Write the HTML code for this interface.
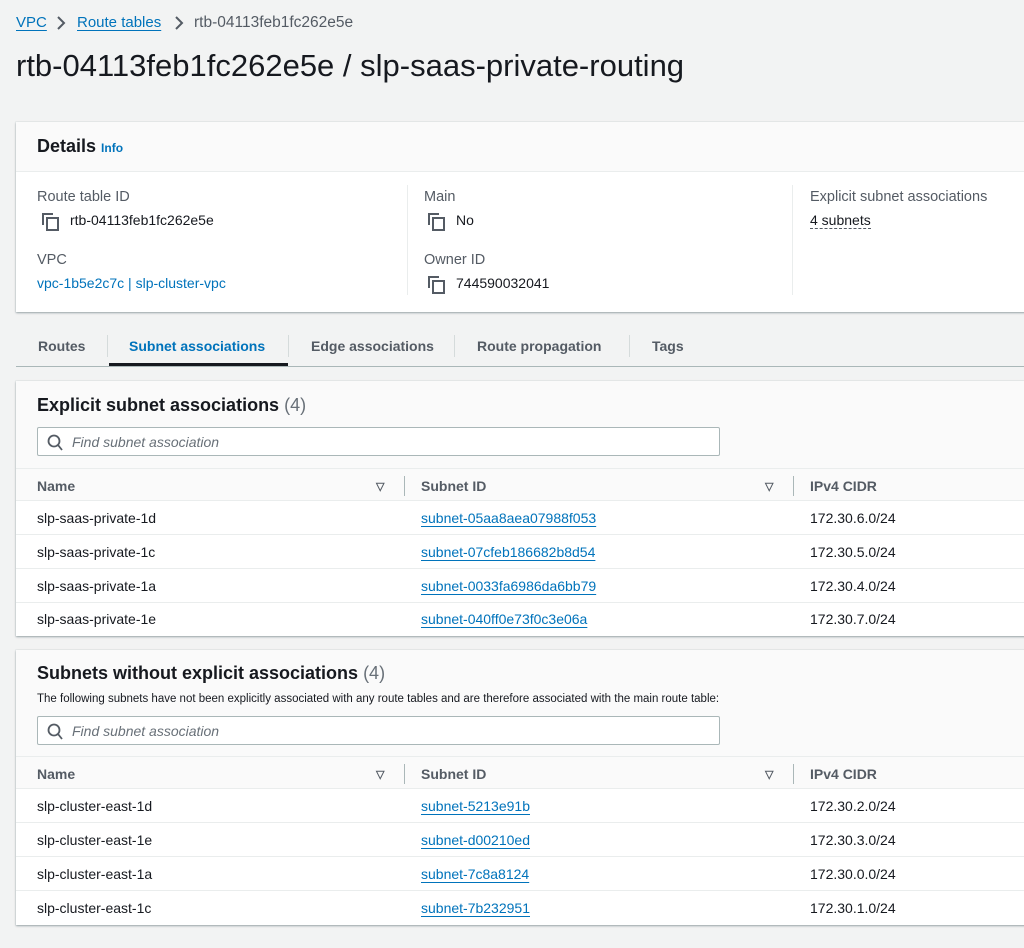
<!DOCTYPE html>
<html><head><meta charset="utf-8"><style>
*{box-sizing:border-box;margin:0;padding:0}
body{width:1024px;height:948px;background:#f2f3f3;font-family:"Liberation Sans",Arial,sans-serif;color:#16191f;position:relative;overflow:hidden;font-size:14px}
.a{position:absolute;white-space:nowrap}
.lk{color:#0073bb}
.ul{text-decoration:underline;text-underline-offset:3px}
.panel{position:absolute;left:16px;width:1020px;background:#fff;box-shadow:0 1px 2px rgba(0,28,36,.35),0 0 0 1px #eaeded}
.hd{background:#fafafa;position:absolute;left:0;right:0;top:0}
.lab{color:#545b64;font-size:14.5px}
.cp{display:inline-block;width:13px;height:14px;position:relative;vertical-align:-2px;margin-right:15px}
.cp:before{content:"";position:absolute;left:0;top:0;width:9px;height:10px;border-left:2px solid #545b64;border-top:2px solid #545b64}
.cp:after{content:"";position:absolute;left:4px;top:4px;width:9px;height:10px;border:2px solid #545b64}
.search{position:absolute;left:21px;width:683px;height:29px;border:1px solid #aab7b8;border-radius:2px;background:#fff}
.search span{position:absolute;left:34px;top:6px;font-style:italic;color:#687078;font-size:14px}
.th{position:absolute;left:0;right:0;height:33px;background:#fafafa;border-top:1px solid #eaeded;border-bottom:1px solid #eaeded;font-weight:bold;color:#545b64}
.row{position:absolute;left:0;right:0;height:34px;border-bottom:1px solid #eaeded}
.row span,.th span{position:absolute;top:9px}
.vd{position:absolute;top:7px;width:1px;height:20px;background:#aab7b8}
.th .tri{position:absolute;top:11px;font-size:11px;color:#545b64}
</style></head><body>
<div class="a lk ul" style="left:16px;top:14px;font-size:15px">VPC</div>
<svg class="a" style="left:56px;top:15px" width="10" height="16" viewBox="0 0 10 16"><path d="M2 2l6 6-6 6" fill="none" stroke="#545b64" stroke-width="2"/></svg>
<div class="a lk ul" style="left:77px;top:14px;font-size:15px">Route tables</div>
<svg class="a" style="left:174px;top:15px" width="10" height="16" viewBox="0 0 10 16"><path d="M2 2l6 6-6 6" fill="none" stroke="#545b64" stroke-width="2"/></svg>
<div class="a" style="left:194px;top:14px;font-size:15.5px;color:#545b64">rtb-04113feb1fc262e5e</div>
<div class="a" style="left:16px;top:48px;font-size:31px">rtb-04113feb1fc262e5e / slp-saas-private-routing</div>

<div class="panel" style="top:122px;height:190px">
 <div class="hd" style="height:50px;border-bottom:1px solid #eaeded"></div>
 <div class="a" style="left:21px;top:14px;font-size:18px;font-weight:bold">Details <span class="lk" style="font-size:12px">Info</span></div>
 <div class="a lab" style="left:21px;top:67px">Route table ID</div>
 <div class="a" style="left:26px;top:90px"><i class="cp"></i>rtb-04113feb1fc262e5e</div>
 <div class="a lab" style="left:21px;top:130px">VPC</div>
 <div class="a lk" style="left:21px;top:153px">vpc-1b5e2c7c | slp-cluster-vpc</div>
 <div class="a" style="left:391px;top:63px;width:1px;height:110px;background:#eaeded"></div>
 <div class="a lab" style="left:408px;top:67px">Main</div>
 <div class="a" style="left:412px;top:90px"><i class="cp"></i>No</div>
 <div class="a lab" style="left:408px;top:130px">Owner ID</div>
 <div class="a" style="left:412px;top:153px"><i class="cp"></i>744590032041</div>
 <div class="a" style="left:776px;top:63px;width:1px;height:110px;background:#eaeded"></div>
 <div class="a lab" style="left:794px;top:67px">Explicit subnet associations</div>
 <div class="a" style="left:794px;top:90px;border-bottom:1px dashed #545b64;line-height:16px">4 subnets</div>
</div>

<div class="a" style="left:16px;top:366px;width:1010px;height:1px;background:#aab7b8"></div>
<div class="a" style="left:38px;top:338px;font-weight:bold;color:#545b64">Routes</div>
<div class="a" style="left:107px;top:335px;width:1px;height:22px;background:#d5dbdb"></div>
<div class="a" style="left:129px;top:338px;font-weight:bold;color:#0073bb">Subnet associations</div>
<div class="a" style="left:109px;top:363px;width:179px;height:3px;background:#16191f"></div>
<div class="a" style="left:288px;top:335px;width:1px;height:22px;background:#d5dbdb"></div>
<div class="a" style="left:311px;top:338px;font-weight:bold;color:#545b64">Edge associations</div>
<div class="a" style="left:454px;top:335px;width:1px;height:22px;background:#d5dbdb"></div>
<div class="a" style="left:477px;top:338px;font-weight:bold;color:#545b64">Route propagation</div>
<div class="a" style="left:629px;top:335px;width:1px;height:22px;background:#d5dbdb"></div>
<div class="a" style="left:652px;top:338px;font-weight:bold;color:#545b64">Tags</div>

<div class="panel" style="top:381px;height:255px">
 <div class="hd" style="height:88px"></div>
 <div class="a" style="left:21px;top:14px;font-size:18px;font-weight:bold">Explicit subnet associations <span style="font-weight:normal;color:#687078">(4)</span></div>
 <div class="search" style="top:46px"><svg style="position:absolute;left:9px;top:6px" width="16" height="17" viewBox="0 0 16 17"><circle cx="7" cy="7" r="5.5" fill="none" stroke="#545b64" stroke-width="1.8"/><path d="M11 11l4 5" stroke="#545b64" stroke-width="1.8"/></svg><span>Find subnet association</span></div>
 <div class="th" style="top:87px"><span style="left:21px">Name</span><span class="tri" style="left:360px">&#9661;</span><div class="vd" style="left:388px"></div><span style="left:405px">Subnet ID</span><span class="tri" style="left:749px">&#9661;</span><div class="vd" style="left:777px"></div><span style="left:794px">IPv4 CIDR</span></div>
 <div class="row" style="top:120px"><span style="left:21px">slp-saas-private-1d</span><span class="lk ul" style="left:405px">subnet-05aa8aea07988f053</span><span style="left:794px">172.30.6.0/24</span></div>
 <div class="row" style="top:154px"><span style="left:21px">slp-saas-private-1c</span><span class="lk ul" style="left:405px">subnet-07cfeb186682b8d54</span><span style="left:794px">172.30.5.0/24</span></div>
 <div class="row" style="top:188px"><span style="left:21px">slp-saas-private-1a</span><span class="lk ul" style="left:405px">subnet-0033fa6986da6bb79</span><span style="left:794px">172.30.4.0/24</span></div>
 <div class="row" style="top:221px;border:0"><span style="left:21px">slp-saas-private-1e</span><span class="lk ul" style="left:405px">subnet-040ff0e73f0c3e06a</span><span style="left:794px">172.30.7.0/24</span></div>
</div>

<div class="panel" style="top:650px;height:275px">
 <div class="hd" style="height:108px"></div>
 <div class="a" style="left:21px;top:13px;font-size:18px;font-weight:bold">Subnets without explicit associations <span style="font-weight:normal;color:#687078">(4)</span></div>
 <div class="a" style="left:21px;top:43px;font-size:11.5px;color:#16191f">The following subnets have not been explicitly associated with any route tables and are therefore associated with the main route table:</div>
 <div class="search" style="top:66px"><svg style="position:absolute;left:9px;top:6px" width="16" height="17" viewBox="0 0 16 17"><circle cx="7" cy="7" r="5.5" fill="none" stroke="#545b64" stroke-width="1.8"/><path d="M11 11l4 5" stroke="#545b64" stroke-width="1.8"/></svg><span>Find subnet association</span></div>
 <div class="th" style="top:106px"><span style="left:21px">Name</span><span class="tri" style="left:360px">&#9661;</span><div class="vd" style="left:388px"></div><span style="left:405px">Subnet ID</span><span class="tri" style="left:749px">&#9661;</span><div class="vd" style="left:777px"></div><span style="left:794px">IPv4 CIDR</span></div>
 <div class="row" style="top:139px"><span style="left:21px">slp-cluster-east-1d</span><span class="lk ul" style="left:405px">subnet-5213e91b</span><span style="left:794px">172.30.2.0/24</span></div>
 <div class="row" style="top:173px"><span style="left:21px">slp-cluster-east-1e</span><span class="lk ul" style="left:405px">subnet-d00210ed</span><span style="left:794px">172.30.3.0/24</span></div>
 <div class="row" style="top:207px"><span style="left:21px">slp-cluster-east-1a</span><span class="lk ul" style="left:405px">subnet-7c8a8124</span><span style="left:794px">172.30.0.0/24</span></div>
 <div class="row" style="top:241px;border:0"><span style="left:21px">slp-cluster-east-1c</span><span class="lk ul" style="left:405px">subnet-7b232951</span><span style="left:794px">172.30.1.0/24</span></div>
</div>
</body></html>
